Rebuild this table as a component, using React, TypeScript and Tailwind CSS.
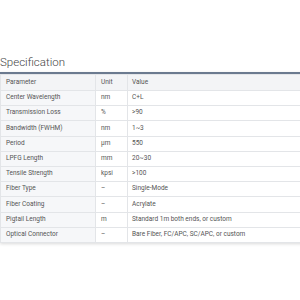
const rows: [string, string, string][] = [
  ["Center Wavelength", "nm", "C+L"],
  ["Transmission Loss", "%", ">90"],
  ["Bandwidth (FWHM)", "nm", "1~3"],
  ["Period", "μm", "550"],
  ["LPFG Length", "mm", "20~30"],
  ["Tensile Strength", "kpsi", ">100"],
  ["Fiber Type", "–", "Single-Mode"],
  ["Fiber Coating", "–", "Acrylate"],
  ["Pigtail Length", "m", "Standard 1m both ends, or custom"],
  ["Optical Connector", "–", "Bare Fiber, FC/APC, SC/APC, or custom"],
];

export default function App() {
  return (
    <div className="h-[300px] w-[300px] overflow-hidden bg-white pt-[54px] font-['Roboto',sans-serif]">
      <h2 className="pb-[2px] text-[11.5px] font-light leading-[16px] text-[#444]">Specification</h2>
      <div className="w-[310px] border-t-2 border-[#6b7a8f] shadow-[0_1px_3px_rgba(0,0,0,0.15)]">
        <table className="w-full border-collapse text-[6.5px] text-[#555]">
          <thead>
            <tr className="h-[16px] bg-[#f3f4f6]">
              <th className="w-[95px] border border-[#e3e5e8] pl-[5px] text-left font-normal">Parameter</th>
              <th className="w-[32px] border border-[#e3e5e8] pl-[5px] text-left font-normal">Unit</th>
              <th className="border border-[#e3e5e8] pl-[4px] text-left font-normal">Value</th>
            </tr>
          </thead>
          <tbody>
            {rows.map(([p, u, v]) => (
              <tr key={p} className="h-[15.2px]">
                <td className="border border-[#e3e5e8] bg-[#f6f7f9] pl-[5px]">{p}</td>
                <td className="border border-[#e3e5e8] pl-[5px]">{u}</td>
                <td className="border border-[#e3e5e8] pl-[4px]">{v}</td>
              </tr>
            ))}
          </tbody>
        </table>
      </div>
    </div>
  );
}
